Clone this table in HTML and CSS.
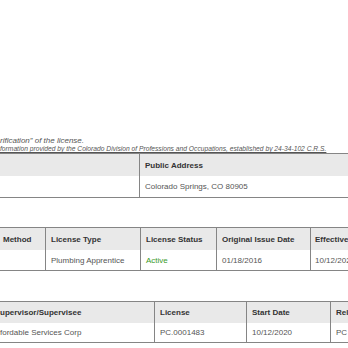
FILE: index.html
```html
<!DOCTYPE html>
<html lang="en">
<head>
<meta charset="utf-8">
<title>License Verification</title>
<link rel="stylesheet" href="styles.css">
</head>
<body>
<main class="page">
  <p class="note">rification” of the license.</p>
  <p class="source">formation provided by the Colorado Division of Professions and Occupations, established by 24-34-102 C.R.S.</p>

  <div class="tbl tbl-person" role="table">
    <div class="cell head first" role="columnheader"></div>
    <div class="cell head" role="columnheader">Public Address</div>
    <div class="cell first" role="cell"></div>
    <div class="cell" role="cell">Colorado Springs, CO 80905</div>
  </div>

  <div class="tbl tbl-license" role="table">
    <div class="cell head first indent" role="columnheader">Method</div>
    <div class="cell head" role="columnheader">License Type</div>
    <div class="cell head" role="columnheader">License Status</div>
    <div class="cell head" role="columnheader">Original Issue Date</div>
    <div class="cell head narrow" role="columnheader">Effective</div>
    <div class="cell first" role="cell"></div>
    <div class="cell" role="cell">Plumbing Apprentice</div>
    <div class="cell active" role="cell">Active</div>
    <div class="cell" role="cell">01/18/2016</div>
    <div class="cell narrow" role="cell">10/12/2020</div>
  </div>

  <div class="tbl tbl-super" role="table">
    <div class="cell head first flush" role="columnheader">upervisor/Supervisee</div>
    <div class="cell head" role="columnheader">License</div>
    <div class="cell head" role="columnheader">Start Date</div>
    <div class="cell head" role="columnheader">Rel</div>
    <div class="cell first flush" role="cell">fordable Services Corp</div>
    <div class="cell" role="cell">PC.0001483</div>
    <div class="cell" role="cell">10/12/2020</div>
    <div class="cell" role="cell">PC</div>
  </div>
</main>
</body>
</html>
```

FILE: styles.css
```css
html, body {
  margin: 0;
  padding: 0;
  background: #ffffff;
  overflow: hidden;
}

.page {
  width: 348px;
  padding-top: 136px;
  font-family: "Liberation Sans", Arial, sans-serif;
  color: #555555;
}

.note {
  margin: 0;
  font-style: italic;
  font-size: 8px;
  line-height: 9px;
  white-space: nowrap;
}

.source {
  margin: 0;
  font-style: italic;
  font-size: 6.7px;
  line-height: 8px;
  text-decoration: underline;
  white-space: nowrap;
}

.tbl {
  display: grid;
  width: max-content;
  border-top: 1px solid #858585;
  border-bottom: 1px solid #858585;
}

.tbl-person {
  grid-template-columns: 139px 300px;
  grid-template-rows: 22px 21px;
}

.tbl-license {
  margin-top: 29px;
  grid-template-columns: 45px 95px 76px 94px 100px;
  grid-template-rows: 22px 20px;
}

.tbl-super {
  margin-top: 30px;
  grid-template-columns: 154px 92px 84px 100px;
  grid-template-rows: 21px 19px;
}

.cell {
  box-sizing: border-box;
  border-left: 1px solid #858585;
  padding: 0 0 0 5px;
  font-size: 8px;
  display: flex;
  align-items: center;
  white-space: nowrap;
  overflow: hidden;
  background: #ffffff;
}

.cell.head {
  background: #e9e9e9;
  font-weight: bold;
  color: #333333;
}

.cell.first {
  border-left: none;
}

.cell.indent {
  padding-left: 3px;
}

.cell.flush {
  padding-left: 0;
}

.cell.narrow {
  padding-left: 4px;
}

.cell.active {
  color: #3a9a2a;
}
```
